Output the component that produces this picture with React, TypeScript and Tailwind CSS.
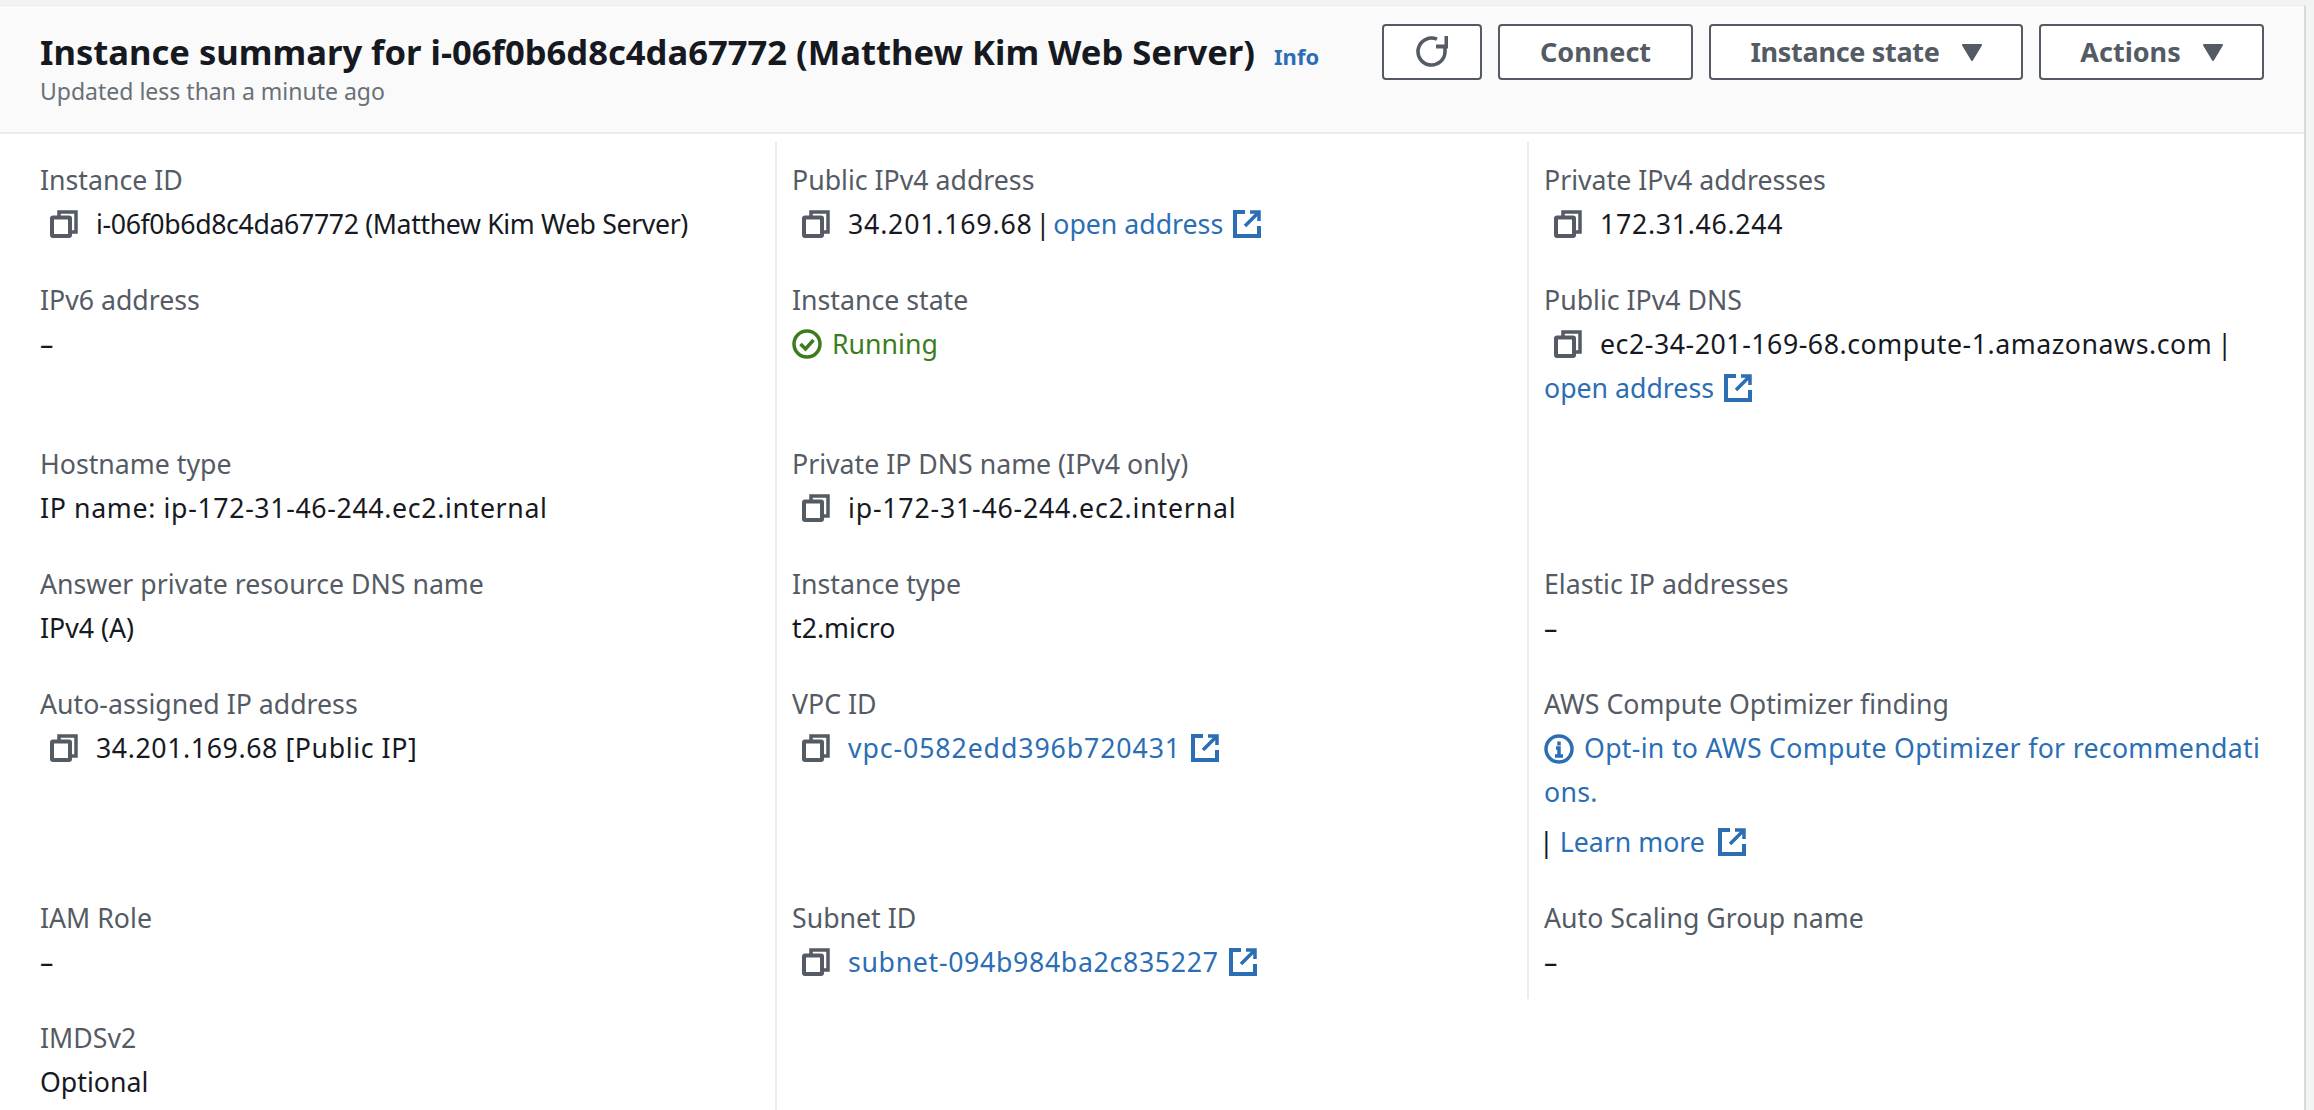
import React from "react";

const Copy = () => (
  <svg width="28" height="28" viewBox="0 0 28 28" className="shrink-0" fill="none" stroke="#545b64" strokeWidth="4">
    <path d="M9 6V2h17v20h-6" strokeWidth="3.5" />
    <rect x="2" y="7.5" width="18" height="18.5" rx="1" />
  </svg>
);

const Ext = () => (
  <svg width="28" height="28" viewBox="0 0 28 28" className="inline-block shrink-0 align-[-4px] ml-[3px]" fill="none" stroke="#2b6eb4" strokeWidth="4">
    <path d="M12 2H2v24h24V16" />
    <path d="M17 2h9v9M26 2 12 16" strokeWidth="3.5" />
  </svg>
);

const Label = ({ children }: { children: React.ReactNode }) => (
  <div className="text-[#545b64] leading-[44px]">{children}</div>
);
const Value = ({ children, className = "" }: { children: React.ReactNode; className?: string }) => (
  <div className={`text-[#16191f] leading-[44px] ${className}`}>{children}</div>
);
const CopyRow = ({ children, className = "" }: { children: React.ReactNode; className?: string }) => (
  <div className={`flex items-center gap-[18px] pl-[10px] leading-[44px] text-[#16191f] whitespace-nowrap ${className}`}>
    <Copy />
    <span>{children}</span>
  </div>
);
const A = ({ children }: { children: React.ReactNode }) => <span className="text-[#2b6eb4]">{children}</span>;

const Cell = ({ label, children, border, first, className = "pb-[32px]" }: { label?: string; children?: React.ReactNode; border?: boolean; first?: boolean; className?: string }) => (
  <div className={`${border ? "border-l-2 border-[#eaeded] pl-[15px]" : "pl-[40px]"} ${first ? "pt-[16px]" : ""} ${className} pr-[8px] min-w-0`}>
    {label ? <Label>{label}</Label> : null}
    {children}
  </div>
);

const Btn = ({ children, w }: { children: React.ReactNode; w: string }) => (
  <div className={`${w} h-[56px] flex items-center justify-center gap-[22px] bg-white border-2 border-[#545b64] rounded-[4px] text-[#545b64] font-bold text-[27px]`}>
    {children}
  </div>
);
const Caret = () => (
  <svg width="20" height="17" viewBox="0 0 20 17" fill="#545b64" stroke="#545b64" strokeWidth="2" strokeLinejoin="round"><path d="M1 1h18L10 16z" /></svg>
);

export default function App() {
  return (
    <div className="w-[2314px] h-[1110px] overflow-hidden bg-[#f2f3f3] pt-[5px] pr-[8px] text-[26.7px]" style={{ fontFamily: '"Noto Sans", sans-serif' }}>
      <div className="h-[1105px] bg-white border-r-2 border-t border-r-[#d5dbdb] border-t-[#eaeded] overflow-hidden">
        <div className="h-[128px] bg-[#fafafa] border-b-2 border-[#eaeded] flex items-start justify-between pl-[40px] pr-[40px]">
          <div className="pt-[22px]">
            <div className="flex items-baseline gap-[19px]">
              <span className="text-[#16191f] font-bold text-[34.6px] leading-[48px] whitespace-nowrap">Instance summary for i-06f0b6d8c4da67772 (Matthew Kim Web Server)</span>
              <span className="text-[#2b6eb4] font-bold text-[22px]">Info</span>
            </div>
            <div className="text-[#687078] text-[23px] leading-[30px]">Updated less than a minute ago</div>
          </div>
          <div className="flex gap-[16px] pt-[18px]">
            <Btn w="w-[100px]">
              <svg width="32" height="32" viewBox="0 0 32 32" fill="none" stroke="#545b64" strokeWidth="3.6">
                <path d="M21 3.2A13.5 13.5 0 1 0 29 16V10" />
                <path d="M20 10.5h10.5V0" strokeWidth="4" />
              </svg>
            </Btn>
            <Btn w="w-[195px]">Connect</Btn>
            <Btn w="w-[314px]"><span className="tracking-[-0.3px]">Instance state</span> <Caret /></Btn>
            <Btn w="w-[225px]">Actions <Caret /></Btn>
          </div>
        </div>
        <div className="grid grid-cols-[775px_752px_1fr] pt-[8px]">
          <Cell first label="Instance ID"><CopyRow className="tracking-[-0.37px]">i-06f0b6d8c4da67772 (Matthew Kim Web Server)</CopyRow></Cell>
          <Cell first border label="Public IPv4 address"><CopyRow><span className="tracking-[0.8px]">34.201.169.68</span><span className="mx-[3px]">|</span><A>open address</A> <Ext /></CopyRow></Cell>
          <Cell first border label="Private IPv4 addresses"><CopyRow className="tracking-[0.7px]">172.31.46.244</CopyRow></Cell>

          <Cell label="IPv6 address"><Value>–</Value></Cell>
          <Cell border label="Instance state">
            <div className="flex items-center gap-[10px] leading-[44px] text-[#3b7d1d]">
              <svg width="30" height="30" viewBox="0 0 30 30" fill="none" stroke="#3b7d1d" strokeWidth="3.5"><circle cx="15" cy="15" r="13" /><path d="m8.5 15 5 5 8-9" /></svg>
              Running
            </div>
          </Cell>
          <Cell border label="Public IPv4 DNS">
            <CopyRow><span className="tracking-[0.55px]">ec2-34-201-169-68.compute-1.amazonaws.com</span><span className="ml-[5px]">|</span></CopyRow>
            <div className="leading-[44px]"><A>open address</A> <Ext /></div>
          </Cell>

          <Cell label="Hostname type"><Value className="tracking-[0.65px]">IP name: ip-172-31-46-244.ec2.internal</Value></Cell>
          <Cell border label="Private IP DNS name (IPv4 only)"><CopyRow className="tracking-[0.8px]">ip-172-31-46-244.ec2.internal</CopyRow></Cell>
          <Cell border />

          <Cell label="Answer private resource DNS name"><Value>IPv4 (A)</Value></Cell>
          <Cell border label="Instance type"><Value>t2.micro</Value></Cell>
          <Cell border label="Elastic IP addresses"><Value>–</Value></Cell>

          <Cell label="Auto-assigned IP address"><CopyRow className="tracking-[0.6px]">34.201.169.68 [Public IP]</CopyRow></Cell>
          <Cell border label="VPC ID"><CopyRow><span className="tracking-[0.9px]"><A>vpc-0582edd396b720431</A></span> <Ext /></CopyRow></Cell>
          <Cell border label="AWS Compute Optimizer finding">
            <div className="leading-[44px] text-[#2b6eb4] whitespace-nowrap tracking-[0.3px]">
              <svg width="30" height="30" viewBox="0 0 30 30" className="inline-block align-[-6px] mr-[10px]" fill="none" stroke="#2b6eb4" strokeWidth="3.5"><circle cx="15" cy="15" r="13" /><path d="M15 7.5v4M12 14h3v7M11 22h8" /></svg>
              Opt-in to AWS Compute Optimizer for recommendati<br />ons.
            </div>
            <div className="leading-[44px] mt-[6px] text-[#16191f] flex items-center">
              <span className="ml-[-5px] mr-[6px]">|</span>
              <A>Learn more</A>
              <span className="ml-[10px] flex"><Ext /></span>
            </div>
          </Cell>

          <Cell label="IAM Role"><Value>–</Value></Cell>
          <Cell border label="Subnet ID"><CopyRow><span className="tracking-[0.67px]"><A>subnet-094b984ba2c835227</A></span> <Ext /></CopyRow></Cell>
          <Cell border label="Auto Scaling Group name" className="self-start pb-[15px]"><Value>–</Value></Cell>

          <Cell label="IMDSv2"><Value>Optional</Value></Cell>
          <Cell border />
          <div />
        </div>
      </div>
    </div>
  );
}
